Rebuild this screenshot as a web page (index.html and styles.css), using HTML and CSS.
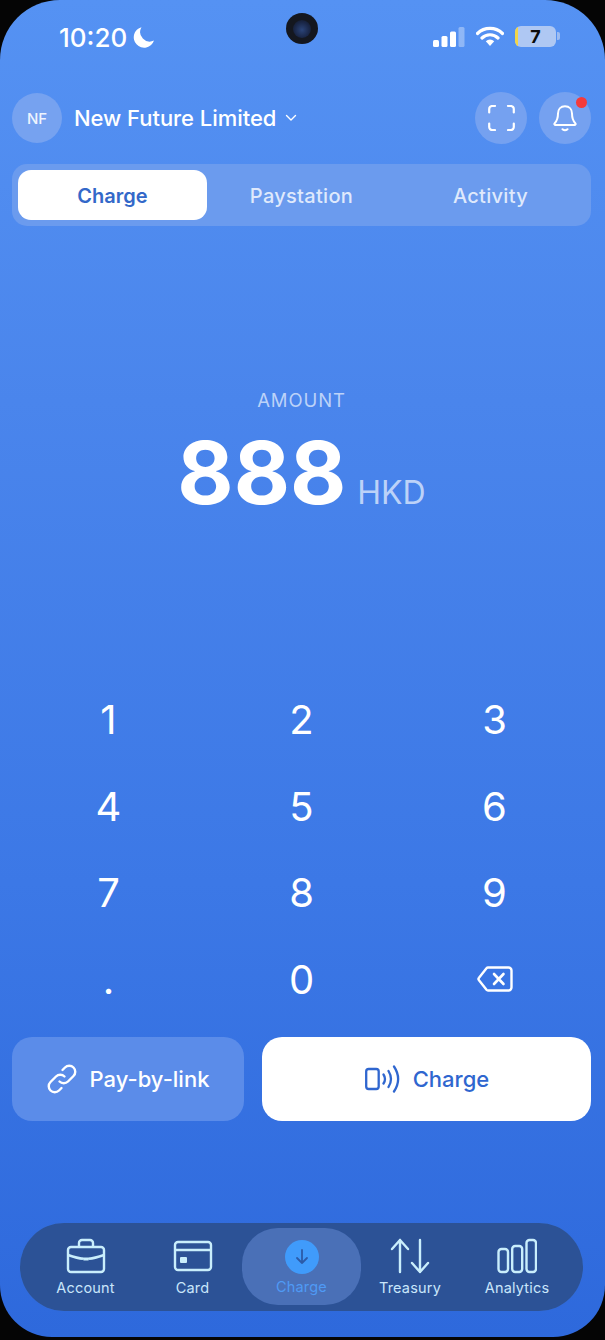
FILE: index.html
```html
<!DOCTYPE html>
<html lang="en">
<head>
<meta charset="utf-8">
<title>Charge</title>
<link rel="stylesheet" href="styles.css">
</head>
<body>
<main class="phone">
  <div class="camera"><span class="lens"></span></div>

  <div class="status">
    <div class="clock"><span>10:20</span>
      <svg class="moon" viewBox="0 0 22 22"><path d="M8.500 1.200A10.400 10.400 0 1 0 21 14.600 9.600 9.600 0 0 1 8.500 1.200Z" fill="#fff"/></svg>
    </div>
    <div class="indicators">
      <svg class="signal" viewBox="0 0 32 20">
        <rect x="0" y="13" width="6" height="7" rx="1.500" fill="#fff"/>
        <rect x="8.500" y="9" width="6" height="11" rx="1.500" fill="#fff"/>
        <rect x="17" y="4.500" width="6" height="15.500" rx="1.500" fill="#fff"/>
        <rect x="25.500" y="0" width="6" height="20" rx="1.500" fill="#fff" fill-opacity=".35"/>
      </svg>
      <svg class="wifi" viewBox="0 0 28 20">
        <path d="M1.500 7.500a18 18 0 0 1 25 0M6 12a11.500 11.500 0 0 1 16 0" fill="none" stroke="#fff" stroke-width="3.200" stroke-linecap="round"/>
        <path d="M9.800 15.200a6 6 0 0 1 8.400 0L14 20Z" fill="#fff"/>
      </svg>
      <div class="battery"><span class="battery-level"></span><span class="battery-num">7</span></div>
      <span class="battery-cap"></span>
    </div>
  </div>

  <header class="topbar">
    <div class="avatar">NF</div>
    <div class="company">New Future Limited</div>
    <svg class="caret" viewBox="0 0 12 8"><path d="M1.500 1.500 6 6l4.500-4.500" fill="none" stroke="#fff" stroke-width="1.400" stroke-linecap="round" stroke-linejoin="round"/></svg>
    <div class="top-actions">
      <button class="round-btn">
        <svg class="scan" viewBox="0 0 27 26"><path d="M1.200 7.500V4a3 3 0 0 1 3-3h2.800M20 1h2.800a3 3 0 0 1 3 3v3.500M25.800 18.500V22a3 3 0 0 1-3 3H20M7 25H4.200a3 3 0 0 1-3-3v-3.500" fill="none" stroke="#fff" stroke-width="2.200" stroke-linecap="round"/></svg>
      </button>
      <button class="round-btn">
        <svg class="bell" viewBox="0 0 24 27"><path d="M12 1.200c-4.400 0-7 3.300-7 7.300 0 5.200-1.200 7.500-3.300 9.700-.7.700-.2 1.800.8 1.800h19c1 0 1.500-1.100.8-1.800-2.100-2.200-3.300-4.500-3.300-9.700 0-4-2.600-7.300-7-7.300ZM9.500 24.200c1.500 1.300 3.500 1.300 5 0" fill="none" stroke="#fff" stroke-width="2" stroke-linecap="round" stroke-linejoin="round"/></svg>
        <span class="dot"></span>
      </button>
    </div>
  </header>

  <nav class="tabs">
    <div class="tab tab-active">Charge</div>
    <div class="tab">Paystation</div>
    <div class="tab">Activity</div>
  </nav>

  <section class="amount">
    <div class="amount-label">AMOUNT</div>
    <div class="amount-value"><span class="amount-num">888</span><span class="amount-cur">HKD</span></div>
  </section>

  <section class="keypad">
    <div class="key">1</div><div class="key">2</div><div class="key">3</div>
    <div class="key">4</div><div class="key">5</div><div class="key">6</div>
    <div class="key">7</div><div class="key">8</div><div class="key">9</div>
    <div class="key">.</div><div class="key">0</div>
    <div class="key">
      <svg class="backspace" viewBox="0 0 36 26"><path d="M11 1.500h20.500a3 3 0 0 1 3 3v17a3 3 0 0 1-3 3H11a2 2 0 0 1-1.500-.7L2 14.300a2 2 0 0 1 0-2.600l7.500-9.500a2 2 0 0 1 1.500-.7Z" fill="none" stroke="#fff" stroke-width="2.400" stroke-linejoin="round"/><path d="m17 8 9.500 10m0-10L17 18" fill="none" stroke="#fff" stroke-width="2.600" stroke-linecap="round"/></svg>
    </div>
  </section>

  <section class="actions">
    <button class="action action-link">
      <svg class="link-icon" viewBox="0 0 30 30"><path d="M12.500 17.500a6 6 0 0 0 8.500 0l5.500-5.500A6 6 0 0 0 18 3.500l-2.500 2.500" fill="none" stroke="#fff" stroke-width="2.400" stroke-linecap="round"/><path d="M17.500 12.500a6 6 0 0 0-8.500 0L3.500 18a6 6 0 0 0 8.500 8.500l2.500-2.500" fill="none" stroke="#fff" stroke-width="2.400" stroke-linecap="round"/></svg>
      <span>Pay-by-link</span>
    </button>
    <button class="action action-charge">
      <svg class="nfc-icon" viewBox="0 0 36 28"><rect x="2.200" y="4" width="12.500" height="20" rx="2.500" fill="none" stroke="#2f66cf" stroke-width="2.300"/><path d="M19.500 9.500c2 3 2 6 0 9M24.500 6c3.300 5.300 3.300 10.700 0 16M30 1.500c5.300 8 5.300 17 0 25" fill="none" stroke="#2f66cf" stroke-width="2.300" stroke-linecap="round"/></svg>
      <span>Charge</span>
    </button>
  </section>

  <nav class="dock">
    <div class="dock-item">
      <svg class="dock-icon" viewBox="0 0 40 36"><path d="M13 9V5a3 3 0 0 1 3-3h8a3 3 0 0 1 3 3v4" fill="none" stroke="#c9eefc" stroke-width="2.400"/><rect x="2" y="9" width="36" height="25" rx="3" fill="none" stroke="#c9eefc" stroke-width="2.400"/><path d="M2 17c6 2 12 3.500 15 3.800M38 17c-6 2-12 3.500-15 3.800" fill="none" stroke="#c9eefc" stroke-width="2.400"/><path d="M16.500 19.500h7l-1 3h-5Z" fill="#c9eefc"/></svg>
      <span>Account</span>
    </div>
    <div class="dock-item">
      <svg class="dock-icon" viewBox="0 0 40 36"><rect x="2" y="4" width="36" height="28" rx="3" fill="none" stroke="#c9eefc" stroke-width="2.400"/><path d="M2 12h36" stroke="#c9eefc" stroke-width="2.400"/><rect x="7" y="19" width="7" height="6" rx="1" fill="#c9eefc"/></svg>
      <span>Card</span>
    </div>
    <div class="dock-item dock-active">
      <span class="dock-circle"><svg class="down" viewBox="0 0 16 18"><path d="M8 2v13M3 10l5 5 5-5" fill="none" stroke="#2c5ba8" stroke-width="1.800" stroke-linecap="round" stroke-linejoin="round"/></svg></span>
      <span>Charge</span>
    </div>
    <div class="dock-item">
      <svg class="dock-icon" viewBox="0 0 40 36"><path d="M10 34V2M2 11l8-9 8 9M30 2v32M22 25l8 9 8-9" fill="none" stroke="#c9eefc" stroke-width="2.400" stroke-linecap="round" stroke-linejoin="round"/></svg>
      <span>Treasury</span>
    </div>
    <div class="dock-item">
      <svg class="dock-icon" viewBox="0 0 40 36"><rect x="1.500" y="11" width="9.500" height="23" rx="3" fill="none" stroke="#c9eefc" stroke-width="2.400"/><rect x="15.200" y="8" width="10" height="26" rx="3" fill="none" stroke="#c9eefc" stroke-width="2.400"/><rect x="29.500" y="2" width="9.500" height="32" rx="3" fill="none" stroke="#c9eefc" stroke-width="2.400"/></svg>
      <span>Analytics</span>
    </div>
  </nav>
</main>
</body>
</html>
```

FILE: styles.css
```css
* { box-sizing: border-box; }

html, body {
  margin: 0;
  width: 605px;
  height: 1340px;
  overflow: hidden;
  background: #050505;
}

body { font-family: Inter, "Liberation Sans", sans-serif; color: #fff; }

.phone {
  position: relative;
  width: 605px;
  height: 1337px;
  padding: 0 14px 0 12px;
  border-radius: 60px 60px 52px 52px;
  background: linear-gradient(180deg, #5592f3 0%, #4a85ec 30%, #3c78e6 66%, #2e69dc 100%);
  display: flex;
  flex-direction: column;
  overflow: hidden;
}

.camera {
  position: absolute;
  left: 286px;
  top: 13px;
  width: 32px;
  height: 31px;
  border-radius: 50%;
  background: #14171f;
  display: flex;
  align-items: center;
  justify-content: center;
}

.lens {
  width: 18px;
  height: 18px;
  border-radius: 50%;
  background: radial-gradient(circle at 50% 55%, #2b4478 0%, #1a2748 55%, #10141f 100%);
}

/* status bar */
.status {
  height: 92px;
  padding: 23px 31px 0 47px;
  display: flex;
  justify-content: space-between;
  align-items: flex-start;
}

.clock {
  display: flex;
  align-items: center;
  gap: 6px;
  font-size: 26px;
  font-weight: 500;
  line-height: 30px;
}

.moon { width: 22px; height: 22px; margin-top: -3px; }

.indicators { display: flex; align-items: flex-start; margin-top: 3px; }

.signal { width: 32px; height: 20px; margin-top: 1px; }

.wifi { width: 28px; height: 20px; margin: 0 11px; }

.battery {
  position: relative;
  width: 41px;
  height: 21px;
  border-radius: 6px;
  background: #afc8f3;
  overflow: hidden;
  text-align: center;
}

.battery-level {
  position: absolute;
  left: 0;
  top: 0;
  bottom: 0;
  width: 3px;
  background: #f2d548;
}

.battery-num {
  color: #0b0b0b;
  font-size: 18px;
  font-weight: 700;
  line-height: 21px;
}

.battery-cap {
  width: 3px;
  height: 8px;
  margin: 6px 0 0 1px;
  border-radius: 0 2px 2px 0;
  background: #9dbcf1;
}

/* top bar */
.topbar {
  height: 52px;
  display: flex;
  align-items: center;
}

.avatar {
  width: 50px;
  height: 50px;
  border-radius: 50%;
  background: #76a2f0;
  display: flex;
  align-items: center;
  justify-content: center;
  font-size: 15px;
  font-weight: 500;
  color: #eef4fe;
}

.company {
  margin-left: 12px;
  font-size: 22px;
  font-weight: 500;
  letter-spacing: -.05px;
}

.caret { width: 12px; height: 8px; margin: 0 0 0 9px; }

.top-actions { margin-left: auto; display: flex; gap: 12px; }

.round-btn {
  position: relative;
  width: 52px;
  height: 52px;
  padding: 0;
  border: 0;
  border-radius: 50%;
  background: #75a1f0;
  display: flex;
  align-items: center;
  justify-content: center;
}

.scan { width: 27px; height: 26px; }

.bell { width: 24px; height: 27px; }

.dot {
  position: absolute;
  top: 5px;
  right: 4px;
  width: 11px;
  height: 11px;
  border-radius: 50%;
  background: #f53b3b;
}

/* tabs */
.tabs {
  margin-top: 20px;
  height: 62px;
  padding: 6px;
  border-radius: 15px;
  background: #6b9bee;
  display: grid;
  grid-template-columns: repeat(3, 1fr);
}

.tab {
  display: flex;
  align-items: center;
  justify-content: center;
  height: 50px;
  padding-top: 1px;
  font-size: 20px;
  font-weight: 500;
  letter-spacing: .3px;
  color: #dfe9fc;
}

.tab-active {
  background: #fff;
  border-radius: 13px;
  color: #3368c9;
  font-weight: 600;
  letter-spacing: 0;
}

/* amount */
.amount {
  margin-top: 163px;
  display: flex;
  flex-direction: column;
  align-items: center;
}

.amount-label {
  font-size: 18.500px;
  line-height: 22px;
  color: #bcd2f8;
  letter-spacing: .9px;
}

.amount-value {
  display: flex;
  align-items: baseline;
  gap: 11px;
  margin-top: 17px;
  line-height: 90px;
}

.amount-num {
  font-size: 86.500px;
  font-weight: 700;
}

.amount-cur {
  font-size: 32px;
  font-weight: 400;
  color: #bcd2f8;
}

/* keypad */
.keypad {
  margin-top: 138px;
  display: grid;
  grid-template-columns: repeat(3, 1fr);
  grid-auto-rows: 86.700px;
}

.key {
  display: flex;
  align-items: center;
  justify-content: center;
  font-size: 40px;
  font-weight: 400;
}

.backspace { width: 36px; height: 26px; }

/* actions */
.actions {
  margin-top: 14px;
  display: flex;
  gap: 18px;
}

.action {
  height: 84px;
  border: 0;
  border-radius: 20px;
  display: flex;
  align-items: center;
  justify-content: center;
  font-family: inherit;
  font-size: 22px;
  font-weight: 500;
}

.action-link {
  width: 232px;
  background: #5b8ce9;
  color: #fff;
  gap: 13px;
}

.action-charge {
  flex: 1;
  background: #fff;
  color: #2f66cf;
  gap: 13px;
}

.link-icon { width: 30px; height: 30px; }

.nfc-icon { width: 36px; height: 28px; }

/* dock */
.dock {
  margin: 102px 8px 0 8px;
  height: 88px;
  padding: 5px 8px 5px 8px;
  border-radius: 44px;
  background: #2c5296;
  box-shadow: 0 0 1px #3a73d8;
  display: grid;
  grid-template-columns: 115px 99px 119px 98px 1fr;
  justify-items: center;
}

.dock-item {
  display: flex;
  flex-direction: column;
  align-items: center;
  width: 100%;
  padding-top: 10px;
  font-size: 14.500px;
  line-height: 20px;
  color: #c9e6fb;
  letter-spacing: .2px;
}

.dock-icon { width: 40px; height: 36px; margin-bottom: 4px; }

.dock-active {
  height: 77px;
  border-radius: 36px;
  background: #4a70b7;
  color: #4f9af5;
  padding-top: 12px;
}

.dock-circle {
  width: 34px;
  height: 34px;
  margin-bottom: 3px;
  border-radius: 50%;
  background: #409bfb;
  display: flex;
  align-items: center;
  justify-content: center;
}

.down { width: 16px; height: 18px; }
```
